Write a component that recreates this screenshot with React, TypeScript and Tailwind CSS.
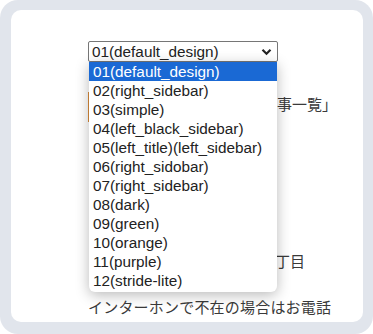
import React from "react";

const options = [
  "01(default_design)",
  "02(right_sidebar)",
  "03(simple)",
  "04(left_black_sidebar)",
  "05(left_title)(left_sidebar)",
  "06(right_sidobar)",
  "07(right_sidebar)",
  "08(dark)",
  "09(green)",
  "10(orange)",
  "11(purple)",
  "12(stride-lite)",
];

export default function App() {
  return (
    <div className="w-[373px] h-[334px] bg-white">
      <div className="w-full h-full bg-[#e1e5ec] rounded-[18px] pt-[10px] pl-[11px] pr-[10px] pb-[12px]">
        <div
          className="relative w-full h-full bg-white rounded-[10px] overflow-hidden text-[#333]"
          style={{ fontFamily: '"Liberation Sans", Arial, sans-serif' }}
        >
          <div className="flex flex-col pl-[77px] pt-[31px]">
            {/* select */}
            <div className="w-[190px] h-[21px] border border-[#767676] rounded-[2px] bg-white flex items-center justify-between pl-[3px] pr-[4px]">
              <span className="text-[15.3px] leading-[19px] text-[#222]">01(default_design)</span>
              <svg width="11" height="8" viewBox="0 0 11 8" className="mr-[1px]">
                <path d="M1.5 1.8 L5.5 5.8 L9.5 1.8" fill="none" stroke="#222" strokeWidth="2.2" />
              </svg>
            </div>

            {/* underlying heading */}
            <div
              className="mt-[30px] w-[249px] border-l-2 border-[#d98c3a] pl-[6px] h-[30px] flex items-start justify-end text-[15px] leading-[24px] text-[#3a3a3a]"
              style={{ fontFamily: '"Noto Sans CJK JP", sans-serif' }}
            >
              「新着記事一覧」
            </div>

            <div
              className="mt-[128px] w-[217px] flex justify-end text-[15px] leading-[22px] text-[#3a3a3a]"
              style={{ fontFamily: '"Noto Sans CJK JP", sans-serif' }}
            >
              東京都千代田区一丁目
            </div>

            <div
              className="mt-[24px] text-[15px] leading-[22px] tracking-[0.2px] text-[#3a3a3a] whitespace-nowrap"
              style={{ fontFamily: '"Noto Sans CJK JP", sans-serif' }}
            >
              インターホンで不在の場合はお電話
            </div>
          </div>

          {/* dropdown list overlay */}
          <div className="absolute left-[78px] top-[52px] w-[188px] bg-white rounded-b-[6px] shadow-[0_3px_14px_rgba(0,0,0,0.28)] pb-[2px]">
            {options.map((o, i) => (
              <div
                key={o}
                className={
                  i === 0
                    ? "h-[19px] pl-[4px] text-[15.3px] leading-[19px] bg-[#1a69d4] text-white"
                    : "h-[19px] pl-[4px] text-[15.3px] leading-[19px] text-[#222]"
                }
              >
                {o}
              </div>
            ))}
          </div>
        </div>
      </div>
    </div>
  );
}
